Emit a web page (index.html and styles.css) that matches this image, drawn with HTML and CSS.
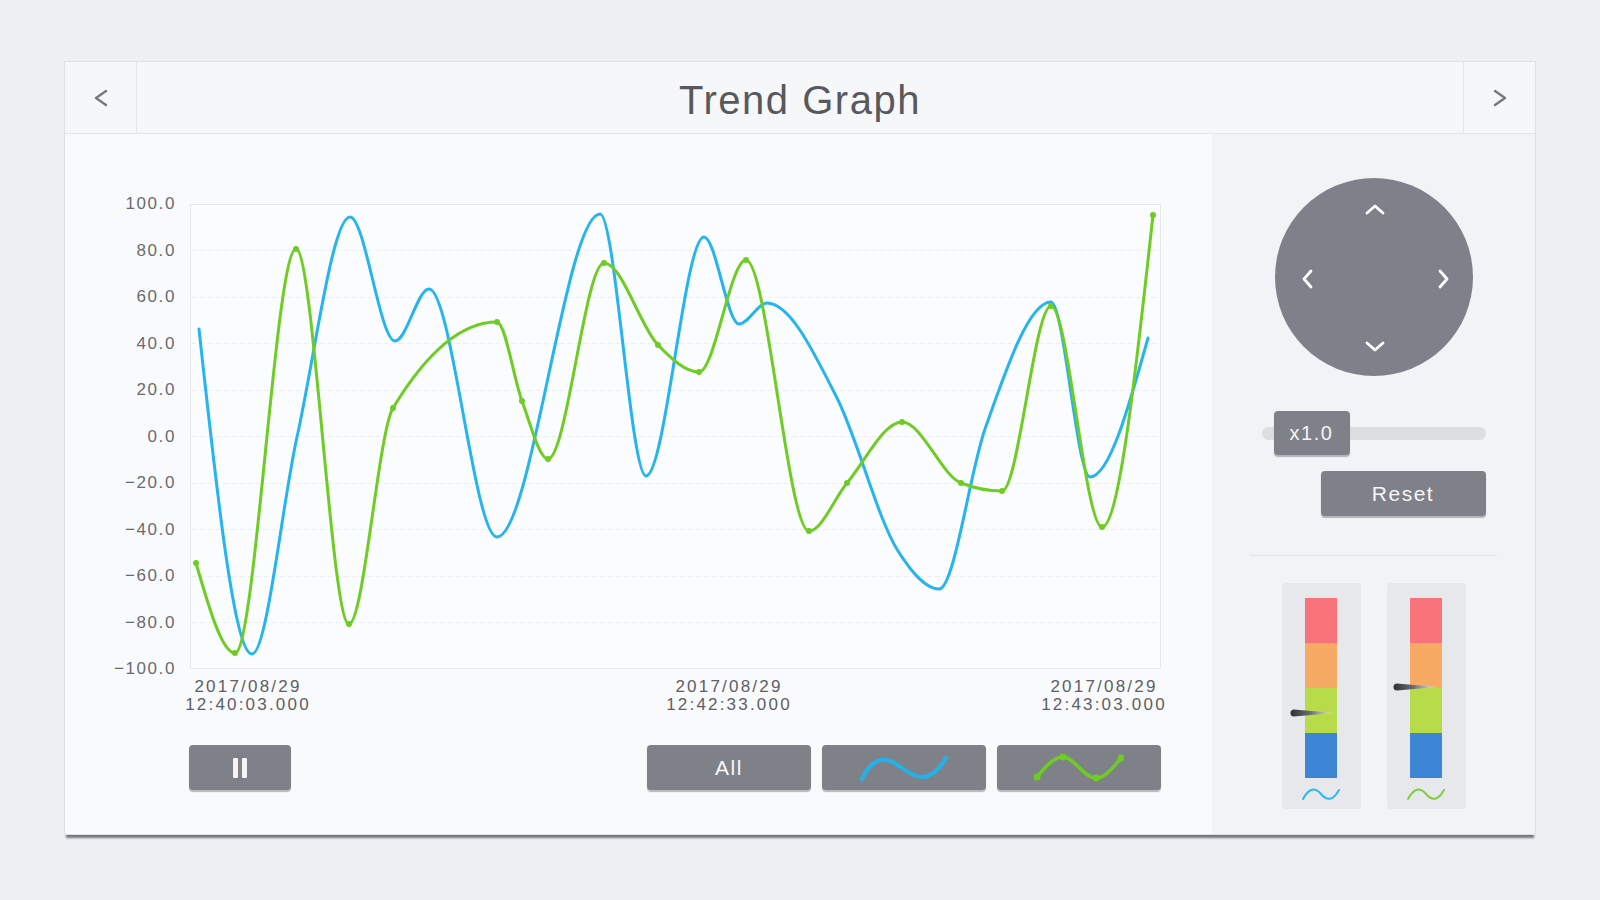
FILE: index.html
```html
<!DOCTYPE html>
<html lang="en">
<head>
<meta charset="utf-8">
<title>Trend Graph</title>
<link rel="stylesheet" href="styles.css">
</head>
<body>
<div class="panel">
  <header class="header">
    <button class="nav nav-prev" aria-label="Previous">
      <svg width="18" height="20" viewBox="0 0 18 20"><polyline points="14,3 4,10 14,17"/></svg>
    </button>
    <h1 class="title">Trend Graph</h1>
    <button class="nav nav-next" aria-label="Next">
      <svg width="18" height="20" viewBox="0 0 18 20"><polyline points="4,3 14,10 4,17"/></svg>
    </button>
  </header>
  <div class="body">
    <section class="chart">
      <div class="plot-row">
        <div class="y-axis">
          <span>100.0</span><span>80.0</span><span>60.0</span><span>40.0</span><span>20.0</span><span>0.0</span><span>−20.0</span><span>−40.0</span><span>−60.0</span><span>−80.0</span><span>−100.0</span>
        </div>
        <div class="plot">
          <svg class="plot-svg" width="971" height="465" viewBox="190 204 971 465">
            <rect class="frame" x="190.5" y="204.5" width="970" height="464"/>
            <g class="grid">
              <line x1="191" x2="1160" y1="250.5" y2="250.5"/>
              <line x1="191" x2="1160" y1="297.5" y2="297.5"/>
              <line x1="191" x2="1160" y1="343.5" y2="343.5"/>
              <line x1="191" x2="1160" y1="390.5" y2="390.5"/>
              <line x1="191" x2="1160" y1="436.5" y2="436.5"/>
              <line x1="191" x2="1160" y1="483.5" y2="483.5"/>
              <line x1="191" x2="1160" y1="529.5" y2="529.5"/>
              <line x1="191" x2="1160" y1="576.5" y2="576.5"/>
              <line x1="191" x2="1160" y1="622.5" y2="622.5"/>
            </g>
            <path class="series series-blue" data-points="199,329 252,654 297,437 350,217 395,341 429,289 497,537 600,214 646,476 704,237 739,324 767,303 837,398 898,551 939,589 985,429 1051,302 1090,477 1148,338"/>
            <path class="series series-green" data-markers="#6fcc24" data-points="196,563 235,653 296,249 349,624 393,408 497,322 522,401 548,459 604,263 658,345 699,372 746,260 809,531 847,483 902,422 961,483 1002,491 1051,306 1102,527 1153,215"/>
          </svg>
        </div>
      </div>
      <div class="x-axis">
        <div class="tick tick-1"><span>2017/08/29</span><span>12:40:03.000</span></div>
        <div class="tick tick-2"><span>2017/08/29</span><span>12:42:33.000</span></div>
        <div class="tick tick-3"><span>2017/08/29</span><span>12:43:03.000</span></div>
      </div>
      <div class="controls">
        <button class="btn btn-pause" aria-label="Pause"><span class="pause-icon"><i></i><i></i></span></button>
        <div class="series-btns">
          <button class="btn btn-series">All</button>
          <button class="btn btn-series" aria-label="Series 1">
            <svg width="90" height="28" viewBox="0 0 90 28"><path d="M3,25 C12,6 24,0 40,12 S70,32 87,4" fill="none" stroke="#22b3ee" stroke-width="4" stroke-linecap="round"/></svg>
          </button>
          <button class="btn btn-series" aria-label="Series 2">
            <svg width="90" height="28" viewBox="0 0 90 28">
              <path d="M3,23 C12,12 20,3 29,3 C40,3 50,24 62,24 C72,24 80,12 87,4" fill="none" stroke="#6fcc24" stroke-width="3.5" stroke-linecap="round"/>
              <circle cx="3" cy="23" r="3.5" fill="#6fcc24"/><circle cx="29" cy="3" r="3.5" fill="#6fcc24"/><circle cx="62" cy="24" r="3.5" fill="#6fcc24"/><circle cx="87" cy="4" r="3.5" fill="#6fcc24"/>
            </svg>
          </button>
        </div>
      </div>
    </section>
    <aside class="side">
      <svg class="joystick" width="198" height="198" viewBox="0 0 198 198">
        <circle cx="99" cy="99" r="99" fill="#7e8189"/>
        <g fill="none" stroke="#ffffff" stroke-width="2.8" stroke-linecap="round" stroke-linejoin="round">
          <polyline points="92,35 100,28 108,35"/>
          <polyline points="92,165 100,172 108,165"/>
          <polyline points="36,93 29,101 36,109"/>
          <polyline points="165,93 172,101 165,109"/>
        </g>
      </svg>
      <div class="zoom">
        <div class="slider"><div class="thumb">x1.0</div></div>
        <button class="btn btn-reset">Reset</button>
      </div>
      <div class="divider"></div>
      <div class="gauges">
        <div class="gauge">
          <div class="bar"><i class="seg seg-red"></i><i class="seg seg-orange"></i><i class="seg seg-green"></i><i class="seg seg-blue"></i></div>
          <svg class="needle needle-1" width="44" height="10" viewBox="0 0 44 10"><defs><linearGradient id="ng1" x1="0" x2="1" y1="0" y2="0"><stop offset="0" stop-color="#2f3033"/><stop offset="0.45" stop-color="#6a6c70"/><stop offset="1" stop-color="#f4f4f4"/></linearGradient></defs><path d="M4,1.5 L44,5 L4,8.5 A3.5,3.5 0 0 1 4,1.5 Z" fill="url(#ng1)"/></svg>
          <svg class="gauge-wave" width="40" height="14" viewBox="0 0 40 14"><path d="M2,12 C8,1 14,0 20,7 S32,14 38,3" fill="none" stroke="#33b7ee" stroke-width="2" stroke-linecap="round"/></svg>
        </div>
        <div class="gauge">
          <div class="bar"><i class="seg seg-red"></i><i class="seg seg-orange"></i><i class="seg seg-green"></i><i class="seg seg-blue"></i></div>
          <svg class="needle needle-2" width="44" height="10" viewBox="0 0 44 10"><defs><linearGradient id="ng2" x1="0" x2="1" y1="0" y2="0"><stop offset="0" stop-color="#2f3033"/><stop offset="0.45" stop-color="#6a6c70"/><stop offset="1" stop-color="#f4f4f4"/></linearGradient></defs><path d="M4,1.5 L44,5 L4,8.5 A3.5,3.5 0 0 1 4,1.5 Z" fill="url(#ng2)"/></svg>
          <svg class="gauge-wave" width="40" height="14" viewBox="0 0 40 14"><path d="M2,12 C8,1 14,0 20,7 S32,14 38,3" fill="none" stroke="#7ed03a" stroke-width="2" stroke-linecap="round"/></svg>
        </div>
      </div>
    </aside>
  </div>
</div>
<script src="script.js"></script>
</body>
</html>
```

FILE: styles.css
```css
* { box-sizing: border-box; }
html, body { margin: 0; padding: 0; }
body {
  background: #eef1f4;
  font-family: "Liberation Sans", Arial, sans-serif;
  width: 1600px;
  height: 900px;
  overflow: hidden;
}
button { font-family: inherit; cursor: pointer; }

.panel {
  margin: 61px 0 0 64px;
  width: 1472px;
  border: 1px solid #dde0e4;
  background: #f9fafc;
  box-shadow: 0 5px 2px -2px rgba(95, 97, 102, 0.85);
}

.header {
  display: flex;
  height: 72px;
  border-bottom: 1px solid #e2e5e9;
  background: #f6f7f9;
}
.nav {
  width: 72px;
  border: 0;
  background: transparent;
  padding: 0;
  display: flex;
  align-items: center;
  justify-content: center;
}
.nav svg polyline { fill: none; stroke: #76787d; stroke-width: 2.4; stroke-linecap: round; stroke-linejoin: round; }
.nav-prev { border-right: 1px solid #e2e5e9; }
.nav-next { border-left: 1px solid #e2e5e9; }
.title {
  flex: 1;
  margin: 0;
  padding-top: 6px;
  text-align: center;
  font-weight: normal;
  font-size: 40px;
  letter-spacing: 1.5px;
  color: #58595c;
  line-height: 64px;
}

.body { display: flex; height: 700px; }

.chart {
  width: 1147px;
  padding-top: 70px;
  background: #f9fafc;
}
.plot-row { display: flex; gap: 15px; }
.y-axis {
  width: 100px;
  margin: -9px 0 -9px 10px;
  height: 483px;
  display: flex;
  flex-direction: column;
  justify-content: space-between;
  align-items: flex-end;
  font-size: 17px;
  letter-spacing: 1.6px;
  line-height: 18px;
  color: #6a6b6e;
}
.y-axis span { margin-right: -1px; }
.plot { width: 971px; height: 465px; }
.plot-svg { display: block; overflow: visible; }
.frame { fill: #fbfcfd; stroke: #e6e8eb; stroke-width: 1; }
.grid line { stroke: #eceef1; stroke-width: 1; stroke-dasharray: 5 3; }
.series { fill: none; stroke-width: 3; stroke-linejoin: round; stroke-linecap: round; }
.series-blue { stroke: #26b4ef; }
.series-green { stroke: #6fcc24; }

.x-axis {
  display: flex;
  margin: 9px 0 0 125px;
  width: 971px;
  font-size: 17px;
  letter-spacing: 2.2px;
  line-height: 18px;
  color: #5e5f62;
}
.tick {
  width: 130px;
  display: flex;
  flex-direction: column;
  align-items: center;
  white-space: nowrap;
}
.tick-1 { margin-left: -7px; }
.tick-2 { margin-left: 351px; }
.tick-3 { margin-left: auto; margin-right: -8px; }

.controls {
  display: flex;
  justify-content: space-between;
  margin: 31px 0 0 124px;
  width: 972px;
}
.btn {
  height: 45px;
  border: 0;
  border-radius: 4px;
  background: #7e8188;
  color: #f7f7f7;
  box-shadow: 0 2px 1px rgba(60, 62, 66, 0.35);
  display: flex;
  align-items: center;
  justify-content: center;
  padding: 0;
  font-size: 21px;
  letter-spacing: 1.5px;
}
.btn-pause { width: 102px; }
.pause-icon { display: flex; gap: 4px; }
.pause-icon i { display: block; width: 5px; height: 20px; background: #f4f4f4; border-radius: 1px; }
.series-btns { display: flex; gap: 11px; }
.btn-series { width: 164px; }

.side {
  flex: 1;
  background: #f1f3f6;
  display: flex;
  flex-direction: column;
  align-items: center;
  padding-top: 44px;
}
.joystick { display: block; }
.zoom {
  width: 224px;
  margin-top: 35px;
  display: flex;
  flex-direction: column;
}
.slider {
  position: relative;
  height: 44px;
  display: flex;
  align-items: center;
}
.slider::before {
  content: "";
  position: absolute;
  left: 0;
  right: 0;
  top: 16px;
  height: 13px;
  border-radius: 7px;
  background: #dcdee2;
}
.thumb {
  position: relative;
  margin-left: 12px;
  width: 76px;
  height: 44px;
  border-radius: 4px;
  background: #7e8188;
  box-shadow: 0 2px 1px rgba(60, 62, 66, 0.35);
  color: #f4f4f4;
  font-size: 20px;
  letter-spacing: 1.5px;
  display: flex;
  align-items: center;
  justify-content: center;
}
.btn-reset {
  align-self: flex-end;
  width: 165px;
  margin-top: 16px;
}
.divider {
  width: 247px;
  height: 1px;
  background: #dfe2e6;
  margin-top: 39px;
}
.gauges {
  display: flex;
  gap: 26px;
  margin-top: 27px;
}
.gauge {
  position: relative;
  width: 79px;
  height: 226px;
  border-radius: 4px;
  background: #e6e8ec;
  display: flex;
  flex-direction: column;
  align-items: center;
  padding-top: 15px;
}
.bar { display: flex; flex-direction: column; width: 32px; }
.seg { display: block; height: 45px; }
.seg-red { background: #f87379; }
.seg-orange { background: #f6aa63; }
.seg-green { background: #b8db4a; }
.seg-blue { background: #3d86d6; }
.gauge-wave { margin-top: 9px; display: block; }
.needle { position: absolute; }
.needle-1 { left: 8px; top: 125px; }
.needle-2 { left: 6px; top: 99px; }
```

FILE: script.js
```js
(function () {
  var NS = "http://www.w3.org/2000/svg";
  function sign(v) { return v < 0 ? -1 : 1; }
  function monotonePath(p) {
    var n = p.length, t = new Array(n), i;
    for (i = 1; i < n - 1; i++) {
      var h0 = p[i][0] - p[i - 1][0], h1 = p[i + 1][0] - p[i][0];
      var s0 = (p[i][1] - p[i - 1][1]) / h0, s1 = (p[i + 1][1] - p[i][1]) / h1;
      var q = (s0 * h1 + s1 * h0) / (h0 + h1);
      t[i] = (sign(s0) + sign(s1)) * Math.min(Math.abs(s0), Math.abs(s1), 0.5 * Math.abs(q)) || 0;
    }
    var hA = p[1][0] - p[0][0];
    t[0] = (3 * (p[1][1] - p[0][1]) / hA - t[1]) / 2;
    var hB = p[n - 1][0] - p[n - 2][0];
    t[n - 1] = (3 * (p[n - 1][1] - p[n - 2][1]) / hB - t[n - 2]) / 2;
    var d = "M" + p[0][0] + "," + p[0][1];
    for (i = 0; i < n - 1; i++) {
      var dx = (p[i + 1][0] - p[i][0]) / 3;
      d += " C" + (p[i][0] + dx) + "," + (p[i][1] + dx * t[i]) + " " +
        (p[i + 1][0] - dx) + "," + (p[i + 1][1] - dx * t[i + 1]) + " " +
        p[i + 1][0] + "," + p[i + 1][1];
    }
    return d;
  }
  var paths = document.querySelectorAll("path[data-points]");
  for (var k = 0; k < paths.length; k++) {
    var el = paths[k];
    var pts = el.getAttribute("data-points").trim().split(/\s+/).map(function (s) {
      return s.split(",").map(Number);
    });
    el.setAttribute("d", monotonePath(pts));
    var mc = el.getAttribute("data-markers");
    if (mc) {
      for (var j = 0; j < pts.length; j++) {
        var c = document.createElementNS(NS, "circle");
        c.setAttribute("cx", pts[j][0]);
        c.setAttribute("cy", pts[j][1]);
        c.setAttribute("r", "3");
        c.setAttribute("fill", mc);
        el.parentNode.appendChild(c);
      }
    }
  }
})();
```
